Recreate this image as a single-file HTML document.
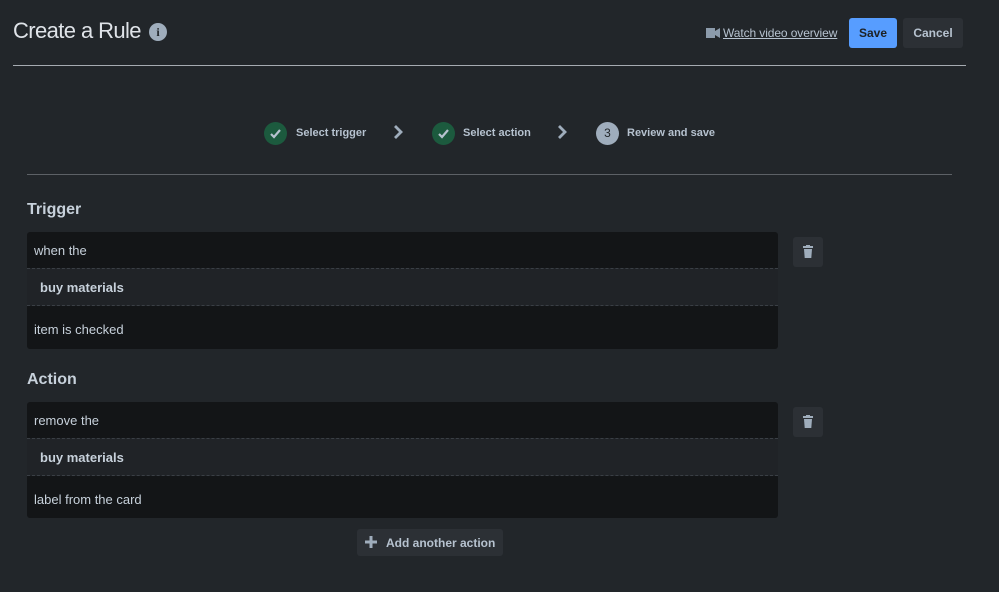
<!DOCTYPE html>
<html><head><meta charset="utf-8"><style>
*{margin:0;padding:0;box-sizing:border-box}
body{width:999px;height:592px;background:#22262a;font-family:"Liberation Sans",sans-serif;color:#c7d1db;position:relative;overflow:hidden}
.abs{position:absolute}
h1{position:absolute;left:13px;top:18px;font-size:22px;font-weight:normal;color:#dfe3e8;letter-spacing:-0.6px}
.info{left:149px;top:23px;width:18px;height:18px;border-radius:50%;background:#9fadbc;color:#22262a;font-size:12px;font-weight:bold;text-align:center;line-height:18px;font-family:"Liberation Serif",serif}
.link{left:723px;top:26px;font-size:12px;text-decoration:underline;color:#b6c2cf;letter-spacing:-0.1px}
.save{left:849px;top:18px;width:48px;height:30px;background:#579dff;border-radius:3px;color:#1d2125;font-size:12px;font-weight:bold;text-align:center;line-height:30px}
.cancel{left:903px;top:18px;width:60px;height:30px;background:#2c3035;border-radius:3px;color:#b6c2cf;font-size:12px;font-weight:bold;text-align:center;line-height:30px}
.hr1{left:13px;top:65px;width:953px;height:1px;background:#a6abb1}
.hr2{left:27px;top:174px;width:925px;height:1px;background:#5d6166}
.step{top:122px;width:23px;height:23px;border-radius:50%;background:#1c5a3e;text-align:center}
.stxt{top:127px;font-size:11px;font-weight:bold;color:#b6c2cf}
.chev{top:124px}
h2{position:absolute;left:27px;font-size:16px;font-weight:bold;color:#c7d1db}
.box{left:27px;width:751px;border-radius:3px;overflow:hidden}
.r1,.r3{background:#131517;font-size:13px;color:#c7d1db;padding-left:7px}
.r2{background:#202327;border-top:1px dashed #3a3f45;border-bottom:1px dashed #3a3f45;font-size:13px;font-weight:bold;padding-left:13px;color:#c7d1db;position:relative}
.trash{left:793px;width:30px;height:30px;background:#2c3035;border-radius:3px}
.add{left:357px;top:529px;width:146px;height:27px;background:#2c3035;border-radius:3px;font-size:12px;font-weight:bold;color:#b6c2cf;line-height:28px;padding-left:29px}
</style></head><body>
<h1>Create a Rule</h1>
<div class="abs info">i</div>
<svg class="abs" style="left:706px;top:28px" width="14" height="10"><rect x="0" y="0" width="9" height="10" fill="#8c9bab"/><path d="M9 3 L14 0 L14 10 L9 7Z" fill="#8c9bab"/></svg>
<div class="abs link">Watch video overview</div>
<div class="abs save">Save</div>
<div class="abs cancel">Cancel</div>
<div class="abs hr1"></div>

<div class="abs step" style="left:264px"><svg width="23" height="23"><path d="M7 12 L10 15 L16 8" stroke="#b6c2cf" stroke-width="2.2" fill="none"/></svg></div>
<div class="abs stxt" style="left:296px">Select trigger</div>
<svg class="abs chev" style="left:392px" width="12" height="16"><path d="M3 2 L9 8 L3 14" stroke="#9fadbc" stroke-width="2.8" fill="none"/></svg>
<div class="abs step" style="left:432px"><svg width="23" height="23"><path d="M7 12 L10 15 L16 8" stroke="#b6c2cf" stroke-width="2.2" fill="none"/></svg></div>
<div class="abs stxt" style="left:463px">Select action</div>
<svg class="abs chev" style="left:556px" width="12" height="16"><path d="M3 2 L9 8 L3 14" stroke="#9fadbc" stroke-width="2.8" fill="none"/></svg>
<div class="abs step" style="left:596px;background:#9fadbc;color:#22262a;font-size:12px;line-height:23px">3</div>
<div class="abs stxt" style="left:627px">Review and save</div>
<div class="abs hr2"></div>

<h2 style="top:201px">Trigger</h2>
<div class="abs box" style="top:232px">
<div class="r1" style="height:36px;line-height:37px">when the</div>
<div class="r2" style="height:38px;line-height:37px">buy materials</div>
<div class="r3" style="height:43px;line-height:48px">item is checked</div>
</div>
<div class="abs trash" style="top:237px"><svg width="30" height="30"><rect x="10" y="9" width="10" height="2" fill="#9fadbc"/><rect x="13" y="8" width="4" height="2" fill="#9fadbc"/><path d="M11 12 H19 L18.3 21 H11.7Z" fill="#9fadbc"/></svg></div>

<h2 style="top:371px">Action</h2>
<div class="abs box" style="top:402px">
<div class="r1" style="height:36px;line-height:37px">remove the</div>
<div class="r2" style="height:38px;line-height:37px">buy materials</div>
<div class="r3" style="height:42px;line-height:48px">label from the card</div>
</div>
<div class="abs trash" style="top:407px"><svg width="30" height="30"><rect x="10" y="9" width="10" height="2" fill="#9fadbc"/><rect x="13" y="8" width="4" height="2" fill="#9fadbc"/><path d="M11 12 H19 L18.3 21 H11.7Z" fill="#9fadbc"/></svg></div>

<div class="abs add">Add another action</div>
<svg class="abs" style="left:365px;top:536px" width="12" height="12"><path d="M6 0V12M0 6H12" stroke="#9fadbc" stroke-width="3"/></svg>
</body></html>
